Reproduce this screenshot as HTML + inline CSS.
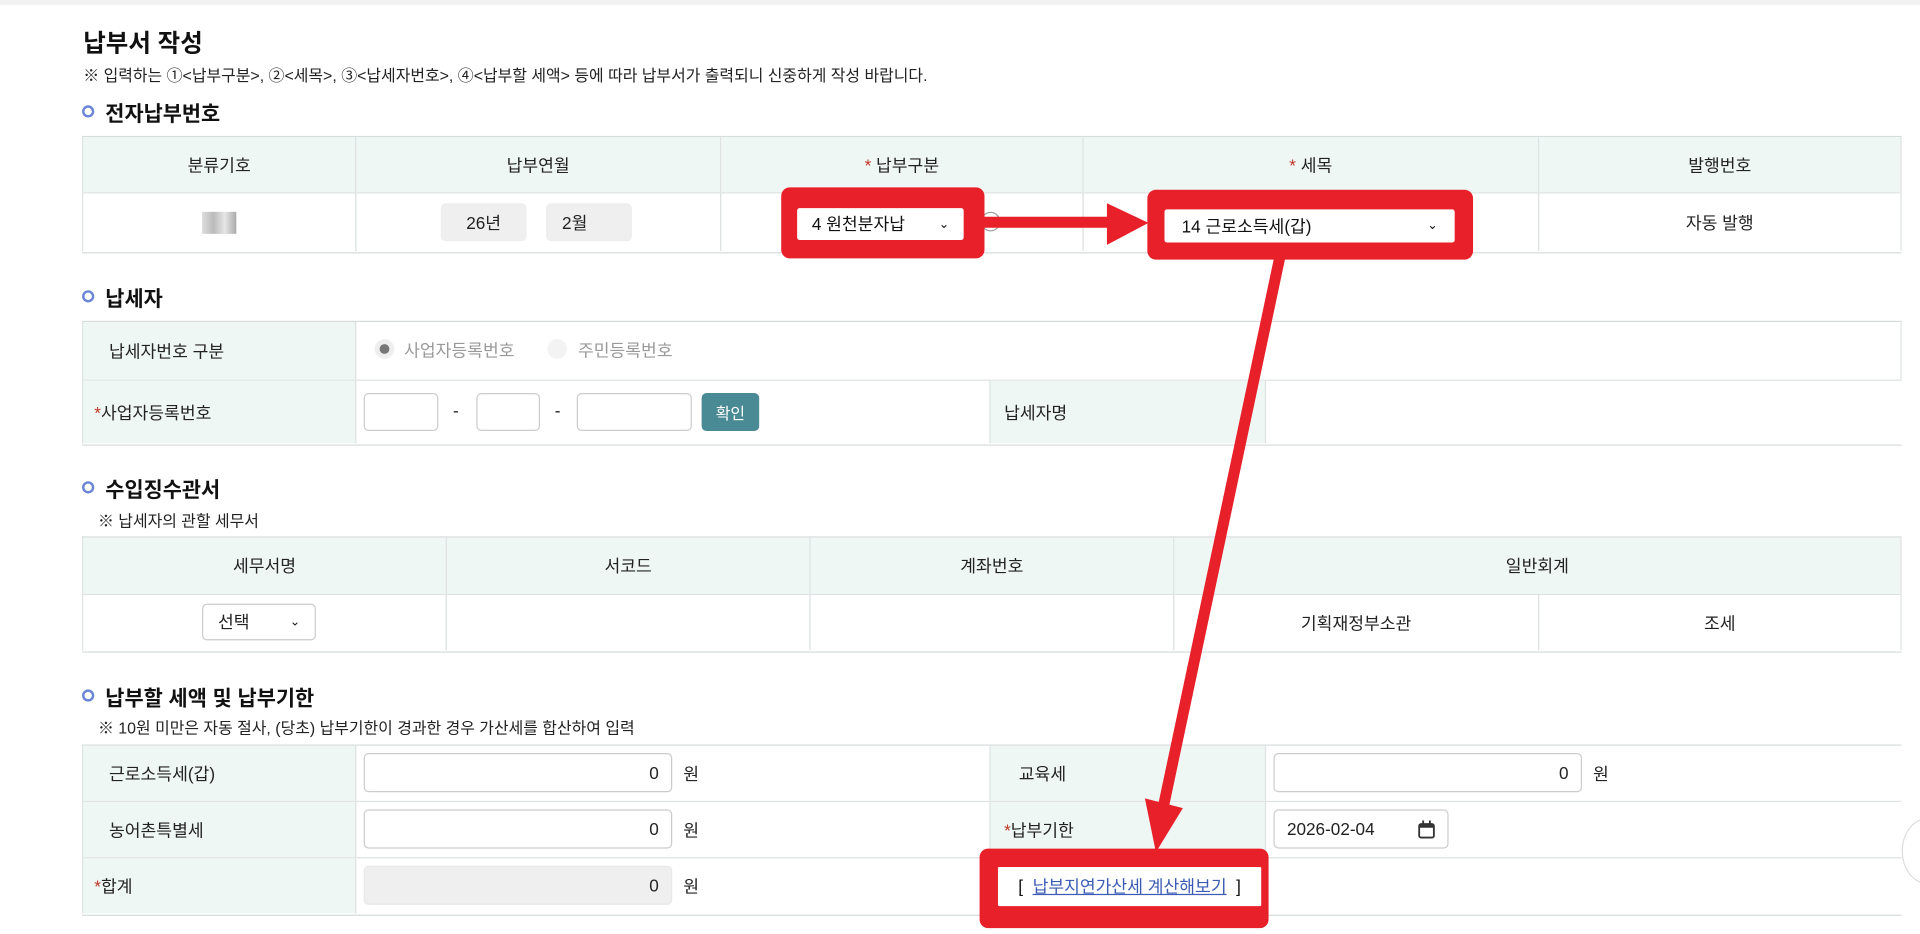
<!DOCTYPE html>
<html><head><meta charset="utf-8"><style>
html,body{margin:0;padding:0;background:#fff;overflow:hidden;width:1920px;height:934px}
#w{position:absolute;left:0;top:0;width:1568px;height:763px;transform:scale(1.22449);transform-origin:0 0;font-family:"Liberation Sans","Noto Sans CJK KR",sans-serif;color:#222}
.a{position:absolute}
.t{position:absolute;white-space:nowrap}
.hd{font-size:17px;font-weight:bold;color:#111}
.dot{position:absolute;width:6px;height:6px;border:2.5px solid #6b86d6;border-radius:50%}
.tb{position:absolute;border-top:1px solid #d6dcdc;border-bottom:1px solid #d6dcdc;left:67px;width:1486px}
.cell{position:absolute;border-right:1px solid #dfe3e3;border-left:1px solid #dfe3e3;box-sizing:border-box;display:flex;align-items:center;justify-content:center;font-size:14px}
.mint{background:#eff7f5}
.hl{position:absolute;left:67px;width:1486px;height:1px;background:#dfe3e3}
.inp{position:absolute;border:1px solid #ccc;border-radius:4px;background:#fff;box-sizing:border-box;font-size:14px;display:flex;align-items:center}
.red{position:absolute;background:#e8202a;border-radius:7px}
.star{color:#c0392b}
.lbl{position:absolute;font-size:14px;white-space:nowrap}
</style></head><body><div id="w">
<div class="a" style="left:0;top:0;width:1568px;height:4px;background:#f2f2f2"></div>
<div class="t" style="left:68px;top:19px;font-size:20px;font-weight:bold;color:#111">납부서 작성</div>
<div class="t" style="left:68px;top:51px;font-size:13px">※ 입력하는 ①&lt;납부구분&gt;, ②&lt;세목&gt;, ③&lt;납세자번호&gt;, ④&lt;납부할 세액&gt; 등에 따라 납부서가 출력되니 신중하게 작성 바랍니다.</div>

<div class="dot" style="left:67px;top:86px"></div><div class="t hd" style="left:86px;top:79px">전자납부번호</div>
<div class="tb" style="top:111px;height:94px"></div>
<div class="cell mint" style="left:67px;top:112px;width:224px;height:45px">분류기호</div>
<div class="cell mint" style="left:290px;top:112px;width:299px;height:45px">납부연월</div>
<div class="cell mint" style="left:588px;top:112px;width:297px;height:45px"><span class="star">*&nbsp;</span>납부구분</div>
<div class="cell mint" style="left:884px;top:112px;width:373px;height:45px"><span class="star">*&nbsp;</span>세목</div>
<div class="cell mint" style="left:1256px;top:112px;width:297px;height:45px">발행번호</div>
<div class="hl" style="top:157px"></div>
<div class="cell" style="left:67px;top:158px;width:224px;height:47px"><div style="width:28px;height:18px;background:linear-gradient(90deg,#ddd,#bbb,#e5e5e5,#aaa)"></div></div>
<div class="cell" style="left:290px;top:158px;width:299px;height:47px"></div>
<div class="cell" style="left:588px;top:158px;width:297px;height:47px"></div>
<div class="cell" style="left:884px;top:158px;width:373px;height:47px"></div>
<div class="cell" style="left:1256px;top:158px;width:297px;height:47px">자동 발행</div>
<div class="inp" style="left:360px;top:166px;width:70px;height:31px;background:#efefef;border-color:#eee;justify-content:center">26년</div>
<div class="inp" style="left:446px;top:166px;width:70px;height:31px;background:#efefef;border-color:#eee;padding-left:12px">2월</div>
<div class="a" style="left:801px;top:173px;width:14px;height:14px;border:1px solid #999;border-radius:50%"></div>

<div class="dot" style="left:67px;top:237px"></div><div class="t hd" style="left:86px;top:230px">납세자</div>
<div class="tb" style="top:262px;height:100px"></div>
<div class="cell mint" style="left:67px;top:263px;width:224px;height:47px;justify-content:flex-start;padding-left:21px">납세자번호 구분</div>
<div class="cell" style="left:290px;top:263px;width:1263px;height:47px;border-left:none"></div>
<div class="hl" style="top:310px"></div>
<div class="cell mint" style="left:67px;top:311px;width:224px;height:51px;justify-content:flex-start;padding-left:9px"><span class="star">*</span>사업자등록번호</div>
<div class="cell mint" style="left:808px;top:311px;width:226px;height:51px;justify-content:flex-start;padding-left:11px">납세자명</div>
<div class="a" style="left:306px;top:277px;width:16px;height:16px;border-radius:50%;background:#eee"></div>
<div class="a" style="left:310px;top:281px;width:8px;height:8px;border-radius:50%;background:#777"></div>
<div class="lbl" style="left:330px;top:276px;color:#999">사업자등록번호</div>
<div class="a" style="left:447px;top:277px;width:16px;height:16px;border-radius:50%;background:#f3f3f3"></div>
<div class="lbl" style="left:472px;top:276px;color:#999">주민등록번호</div>
<div class="inp" style="left:297px;top:321px;width:61px;height:31px"></div>
<div class="lbl" style="left:370px;top:327px">-</div>
<div class="inp" style="left:389px;top:321px;width:52px;height:31px"></div>
<div class="lbl" style="left:453px;top:327px">-</div>
<div class="inp" style="left:471px;top:321px;width:94px;height:31px"></div>
<div class="inp" style="left:573px;top:321px;width:47px;height:31px;background:#4a8a94;border:none;color:#fff;justify-content:center;font-size:13px">확인</div>

<div class="dot" style="left:67px;top:393px"></div><div class="t hd" style="left:86px;top:386px">수입징수관서</div>
<div class="t" style="left:80px;top:415px;font-size:13px">※ 납세자의 관할 세무서</div>
<div class="tb" style="top:438px;height:93px"></div>
<div class="cell mint" style="left:67px;top:439px;width:298px;height:46px">세무서명</div>
<div class="cell mint" style="left:364px;top:439px;width:298px;height:46px">서코드</div>
<div class="cell mint" style="left:661px;top:439px;width:298px;height:46px">계좌번호</div>
<div class="cell mint" style="left:958px;top:439px;width:595px;height:46px">일반회계</div>
<div class="hl" style="top:485px"></div>
<div class="cell" style="left:67px;top:486px;width:298px;height:45px"></div>
<div class="cell" style="left:364px;top:486px;width:298px;height:45px"></div>
<div class="cell" style="left:661px;top:486px;width:298px;height:45px"></div>
<div class="cell" style="left:958px;top:486px;width:299px;height:45px">기획재정부소관</div>
<div class="cell" style="left:1256px;top:486px;width:297px;height:45px">조세</div>
<div class="inp" style="left:165px;top:493px;width:93px;height:30px;padding-left:12px">선택<span style="position:absolute;right:12px;font-size:10px">⌄</span></div>

<div class="dot" style="left:67px;top:563px"></div><div class="t hd" style="left:86px;top:556px">납부할 세액 및 납부기한</div>
<div class="t" style="left:80px;top:584px;font-size:13px">※ 10원 미만은 자동 절사, (당초) 납부기한이 경과한 경우 가산세를 합산하여 입력</div>
<div class="tb" style="top:608px;height:138px"></div>
<div class="cell mint" style="left:67px;top:609px;width:224px;height:45px;justify-content:flex-start;padding-left:21px">근로소득세(갑)</div>
<div class="cell mint" style="left:808px;top:609px;width:226px;height:45px;justify-content:flex-start;padding-left:23px">교육세</div>
<div class="hl" style="top:654px"></div>
<div class="cell mint" style="left:67px;top:655px;width:224px;height:45px;justify-content:flex-start;padding-left:21px">농어촌특별세</div>
<div class="cell mint" style="left:808px;top:655px;width:226px;height:45px;justify-content:flex-start;padding-left:11px"><span class="star">*</span>납부기한</div>
<div class="hl" style="top:700px"></div>
<div class="cell mint" style="left:67px;top:701px;width:224px;height:45px;justify-content:flex-start;padding-left:9px"><span class="star">*</span>합계</div>
<div class="cell" style="left:808px;top:701px;width:226px;height:45px;border-right:none"></div>
<div class="inp" style="left:297px;top:615px;width:252px;height:32px;justify-content:flex-end;padding-right:10px">0</div><div class="lbl" style="left:558px;top:622px">원</div>
<div class="inp" style="left:1040px;top:615px;width:252px;height:32px;justify-content:flex-end;padding-right:10px">0</div><div class="lbl" style="left:1301px;top:622px">원</div>
<div class="inp" style="left:297px;top:661px;width:252px;height:32px;justify-content:flex-end;padding-right:10px">0</div><div class="lbl" style="left:558px;top:668px">원</div>
<div class="inp" style="left:1040px;top:661px;width:143px;height:32px;padding-left:10px">2026-02-04<svg style="position:absolute;right:10px;top:8px" width="14" height="15"><rect x="1" y="3" width="12" height="11" rx="1.5" fill="none" stroke="#333" stroke-width="1.5"/><rect x="1" y="3" width="12" height="3" fill="#333"/><rect x="3.5" y="0" width="1.5" height="4" fill="#333"/><rect x="9" y="0" width="1.5" height="4" fill="#333"/></svg></div>
<div class="inp" style="left:297px;top:707px;width:252px;height:32px;justify-content:flex-end;padding-right:10px;background:#efefef;border-color:#e8e8e8">0</div><div class="lbl" style="left:558px;top:714px">원</div>

<svg class="a" style="left:0;top:0;z-index:5" width="1568" height="763"><g fill="#e8202a" stroke="none">
<rect x="803" y="177" width="105" height="9"/><polygon points="904,166 938,182 904,200"/>
<polygon points="1041,208 1050,209 954,662 945,661"/><polygon points="935,652 966,660 944,696"/></g></svg>
<div class="red" style="left:638px;top:153px;width:166px;height:58px;z-index:6"></div>
<div class="inp" style="left:651px;top:170px;width:136px;height:26px;border:none;border-radius:2px;padding-left:12px;color:#111;z-index:7">4 원천분자납<span style="position:absolute;right:12px;font-size:10px">⌄</span></div>
<div class="red" style="left:937px;top:155px;width:266px;height:57px;z-index:6"></div>
<div class="inp" style="left:951px;top:171px;width:237px;height:27px;border:none;border-radius:2px;padding-left:14px;color:#111;z-index:7">14 근로소득세(갑)<span style="position:absolute;right:14px;font-size:10px">⌄</span></div>
<div class="red" style="left:800px;top:693px;width:236px;height:65px;z-index:6"></div>
<div class="inp" style="left:815px;top:708px;width:215px;height:32px;border:none;border-radius:1px;justify-content:center;color:#111;z-index:7">[&nbsp;&nbsp;<span style="color:#3b5bb5;text-decoration:underline">납부지연가산세 계산해보기</span>&nbsp;&nbsp;]</div>
<div class="a" style="left:1553px;top:668px;width:40px;height:52px;border:1px solid #ddd;border-radius:50%;background:#fff"></div>
</div></body></html>
